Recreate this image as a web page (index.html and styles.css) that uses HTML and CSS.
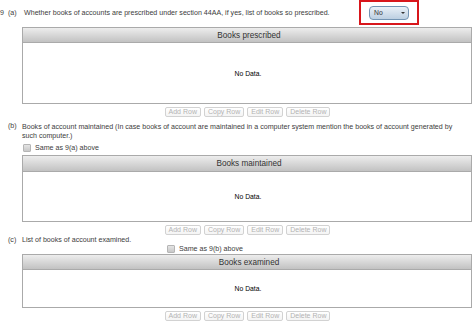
FILE: index.html
```html
<!DOCTYPE html>
<html>
<head>
<meta charset="utf-8">
<link rel="stylesheet" href="styles.css">
</head>
<body>
<div class="page">
  <div class="row-a">
    <span class="num">9</span>
    <span class="lbl">(a)</span>
    <span class="qtext">Whether books of accounts are prescribed under section 44AA, if yes, list of books so prescribed.</span>
    <span class="sel-wrap"><span class="sel"><span class="sel-val">No</span><span class="sel-btn"><span class="arrow"></span></span></span></span>
  </div>

  <div class="grid">
    <div class="grid-head">Books prescribed</div>
    <div class="grid-body b1">No Data.</div>
  </div>
  <div class="btns">
    <span class="btn">Add Row</span><span class="btn">Copy Row</span><span class="btn">Edit Row</span><span class="btn">Delete Row</span>
  </div>

  <div class="row-b">
    <span class="lbl sup">(b)</span>
    <div class="btext">
      <p class="para">Books of account maintained (In case books of account are maintained in a computer system mention the books of account generated by such computer.)</p>
      <label class="chk"><span class="box"></span>Same as 9(a) above</label>
    </div>
  </div>

  <div class="grid g2">
    <div class="grid-head">Books maintained</div>
    <div class="grid-body b2">No Data.</div>
  </div>
  <div class="btns">
    <span class="btn">Add Row</span><span class="btn">Copy Row</span><span class="btn">Edit Row</span><span class="btn">Delete Row</span>
  </div>

  <div class="row-c">
    <span class="lbl">(c)</span>
    <span class="ctext">List of books of account examined.</span>
    <label class="chk chk-c"><span class="box"></span>Same as 9(b) above</label>
  </div>

  <div class="grid g3">
    <div class="grid-head">Books examined</div>
    <div class="grid-body b3">No Data.</div>
  </div>
  <div class="btns">
    <span class="btn">Add Row</span><span class="btn">Copy Row</span><span class="btn">Edit Row</span><span class="btn">Delete Row</span>
  </div>
</div>
</body>
</html>
```

FILE: styles.css
```css
html, body {
  margin: 0;
  padding: 0;
  background: #ffffff;
}
.page {
  width: 474px;
  height: 323px;
  overflow: hidden;
  font-family: "Liberation Sans", Arial, sans-serif;
  font-size: 7.1px;
  color: #3c3c3c;
}
.row-a {
  display: flex;
  align-items: center;
  height: 26px;
}
.num {
  width: 8px;
  flex: none;
}
.lbl {
  width: 14px;
  flex: none;
}
.qtext {
  width: 337px;
  flex: none;
  white-space: nowrap;
  padding-left: 2px;
  box-sizing: border-box;
}
.sel-wrap {
  box-sizing: border-box;
  width: 60px;
  height: 25px;
  border: 2px solid #d8161b;
  display: flex;
  align-items: center;
  justify-content: center;
  margin-top: -1px;
}
.sel {
  box-sizing: border-box;
  width: 40px;
  height: 14px;
  border: 1px solid #7394b3;
  border-radius: 4px;
  background: linear-gradient(#e9f0f7, #bccfe1);
  display: flex;
  align-items: center;
  color: #333;
  font-size: 6.8px;
}
.sel-val {
  flex: 1;
  padding-left: 4px;
}
.sel-btn {
  width: 11px;
  height: 100%;
  display: flex;
  align-items: center;
  justify-content: center;
}
.arrow {
  width: 0;
  height: 0;
  border-left: 2px solid transparent;
  border-right: 2px solid transparent;
  border-top: 2px solid #333;
}
.grid {
  margin: 1px 0 0 22px;
  width: 450px;
  box-sizing: border-box;
  border: 1px solid #aaaaaa;
}
.grid-head {
  height: 15px;
  box-sizing: border-box;
  border-bottom: 1px solid #aaaaaa;
  background: linear-gradient(#ededed, #c2c2c2);
  display: flex;
  align-items: center;
  justify-content: center;
  color: #333;
  font-size: 8.2px;
  padding-left: 4px;
}
.grid-body {
  background: #fff;
  display: flex;
  align-items: center;
  justify-content: center;
  color: #000;
  font-size: 6.8px;
  padding-left: 2px;
}
.b1 { height: 60px; }
.b2 { height: 49px; }
.b3 { height: 37px; }
.g2 { margin-top: 2px; }
.g2 .grid-head { height: 16px; }
.g3 { margin-top: 0; }
.btns {
  display: flex;
  justify-content: center;
  gap: 3px;
  margin: 3px 0 0 22px;
  width: 451px;
}
.btn {
  box-sizing: border-box;
  height: 10px;
  padding: 0 3px;
  border: 1px solid #d2d2d2;
  border-radius: 2px;
  color: #b3b3b3;
  font-size: 7px;
  line-height: 8px;
  background: linear-gradient(#ffffff, #f4f4f4);
}
.row-b {
  display: flex;
  margin-top: 6px;
}
.row-b .lbl {
  padding-left: 8px;
  width: 14px;
}
.sup {
  line-height: 8px;
  margin-top: -1px;
}
.btext {
  width: 450px;
}
.para {
  margin: 0;
  width: 442px;
  line-height: 9px;
}
.chk {
  display: flex;
  align-items: center;
  height: 10px;
  margin-top: 2px;
  padding-left: 1px;
}
.box {
  box-sizing: border-box;
  width: 8px;
  height: 8px;
  border: 1px solid #b5b5b5;
  background: linear-gradient(#e4e4e4, #c8c8c8);
  border-radius: 1px;
  margin-right: 4px;
}
.row-c {
  display: flex;
  height: 19px;
  padding-left: 8px;
}
.row-c .lbl {
  padding-top: 1px;
}
.ctext {
  width: 144px;
  padding-top: 1px;
  line-height: 9px;
}
.chk-c {
  align-self: flex-end;
  margin-top: 0;
  margin-bottom: 0;
}
```
